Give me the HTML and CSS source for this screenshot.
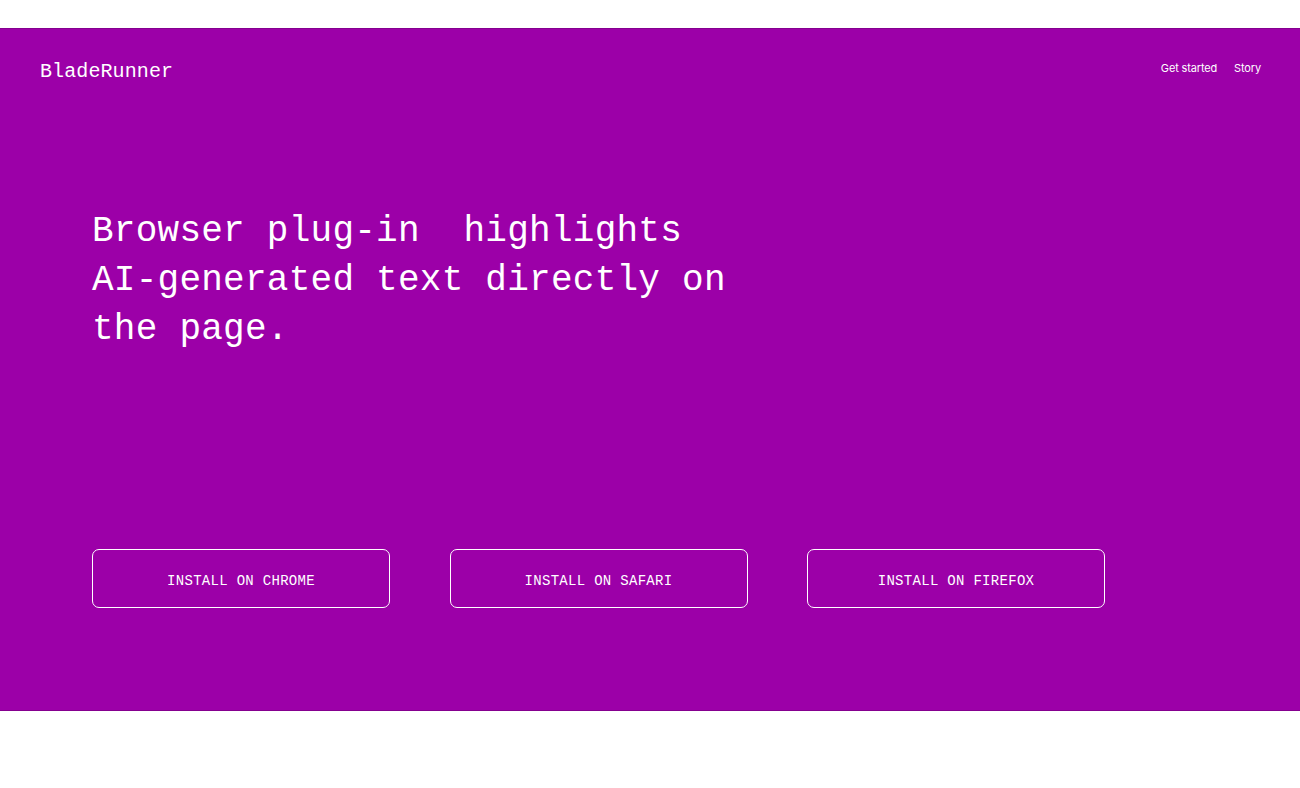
FILE: index.html
```html
<!DOCTYPE html>
<html lang="en">
<head>
    <meta charset="UTF-8">
    <meta name="viewport" content="width=device-width, initial-scale=1.0">
    <title>BladeRunner</title>
    <link rel="stylesheet" href="styles.css">
</head>
<body>
    <div class="topbar"></div>
    <section class="hero">
        <header class="header">
            <div class="logo">BladeRunner</div>
            <nav class="nav">
                <a href="#">Get started</a>
                <a href="#">Story</a>
            </nav>
        </header>

        <h1 class="headline">Browser plug-in&nbsp; highlights<br>AI-generated text directly on<br>the page.</h1>

        <div class="installs">
            <a class="install-btn" href="#">INSTALL ON CHROME</a>
            <a class="install-btn" href="#">INSTALL ON SAFARI</a>
            <a class="install-btn" href="#">INSTALL ON FIREFOX</a>
        </div>
    </section>
</body>
</html>
```

FILE: styles.css
```css
body {
    margin: 0;
    background: #fff;
    font-family: 'Liberation Mono', monospace;
    color: #fff;
}
.topbar {
    height: 28px;
    background: #fff;
}
.hero {
    background: #9c00a8;
    border-top: 1px solid #85008f;
    border-bottom: 1px solid #85008f;
    height: 681px;
    box-sizing: content-box;
}
.header {
    display: flex;
    justify-content: space-between;
    align-items: flex-start;
    padding: 31px 39px 0 40px;
}
.logo {
    font-size: 20px;
    line-height: 24px;
    letter-spacing: 0.1px;
}
.nav {
    display: flex;
    gap: 17px;
    padding-top: 1px;
}
.nav a {
    font-family: Inter, 'Noto Sans', sans-serif;
    font-size: 11px;
    letter-spacing: -0.15px;
    color: #fff;
    text-decoration: none;
}
.headline {
    margin: 123px 0 0 92px;
    font-size: 36px;
    line-height: 49px;
    letter-spacing: 0.25px;
    font-weight: normal;
}
.installs {
    display: flex;
    gap: 59.5px;
    margin: 195px 0 0 92px;
}
.install-btn {
    width: 298px;
    height: 59px;
    box-sizing: border-box;
    border: 1.5px solid #fff;
    border-radius: 7px;
    display: flex;
    align-items: center;
    justify-content: center;
    color: #fff;
    text-decoration: none;
    font-size: 14px;
    letter-spacing: 0.3px;
    padding-top: 4px;
}
```
